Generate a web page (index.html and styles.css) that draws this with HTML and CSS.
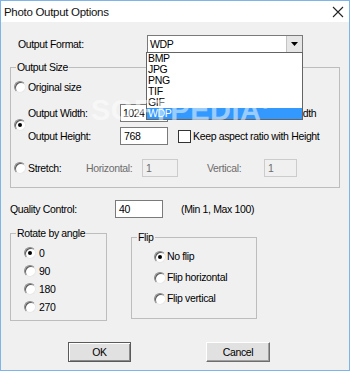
FILE: index.html
```html
<!DOCTYPE html>
<html>
<head>
<meta charset="utf-8">
<link rel="stylesheet" href="styles.css">
</head>
<body>
<div class="window">
  <div class="titlebar">
    <span class="title">Photo Output Options</span>
    <svg class="close" width="12" height="12" viewBox="0 0 12 12"><path d="M1 1 L11 11 M11 1 L1 11" stroke="#222" stroke-width="1.1" fill="none"/></svg>
  </div>
  <div class="body">
    <div class="format-row">
      <span class="lbl indent">Output Format:</span>
      <div class="combo">
        <span class="combo-val">WDP</span>
        <span class="combo-btn"><svg width="7" height="4" viewBox="0 0 7 4"><path d="M0 0 H7 L3.5 4 Z" fill="#000"/></svg></span>
        <ul class="list">
          <li>BMP</li><li>JPG</li><li>PNG</li><li>TIF</li><li>GIF</li><li class="sel">WDP</li>
        </ul>
      </div>
    </div>

    <div class="group size-box">
      <span class="legend">Output Size</span>
      <div class="opt-row">
        <span class="radio"></span><span class="lbl">Original size</span>
      </div>
      <div class="dim-group">
        <span class="radio checked"></span>
        <div class="dim-grid">
          <span class="lbl">Output Width:</span>
          <span class="edit tight">1024</span>
          <span class="check"></span>
          <span class="lbl">Keep aspect ratio with Width</span>
          <span class="lbl">Output Height:</span>
          <span class="edit">768</span>
          <span class="check"></span>
          <span class="lbl">Keep aspect ratio with Height</span>
        </div>
      </div>
      <div class="stretch-row">
        <span class="radio"></span>
        <span class="lbl">Stretch:</span>
        <span class="lbl dis">Horizontal:</span>
        <span class="edit disabled">1</span>
        <span></span>
        <span class="lbl dis">Vertical:</span>
        <span class="edit disabled">1</span>
      </div>
    </div>

    <div class="quality-row">
      <span class="lbl">Quality Control:</span>
      <span class="edit">40</span>
      <span class="lbl">(Min 1, Max 100)</span>
    </div>

    <div class="groups">
      <div class="group rotate-box">
        <span class="legend">Rotate by angle</span>
        <div class="r-row"><span class="radio checked"></span><span class="lbl">0</span></div>
        <div class="r-row"><span class="radio"></span><span class="lbl">90</span></div>
        <div class="r-row"><span class="radio"></span><span class="lbl">180</span></div>
        <div class="r-row"><span class="radio"></span><span class="lbl">270</span></div>
      </div>
      <div class="group flip-box">
        <span class="legend">Flip</span>
        <div class="f-row"><span class="radio checked"></span><span class="lbl">No flip</span></div>
        <div class="f-row"><span class="radio"></span><span class="lbl">Flip horizontal</span></div>
        <div class="f-row"><span class="radio"></span><span class="lbl">Flip vertical</span></div>
      </div>
    </div>

    <div class="buttons">
      <span class="btn default">OK</span>
      <span class="btn">Cancel</span>
    </div>
  </div>
  <span class="watermark">SOFTPEDIA<sup>®</sup></span>
</div>
</body>
</html>
```

FILE: styles.css
```css
* { box-sizing: border-box; }
html, body { margin: 0; padding: 0; }
body {
  width: 350px;
  height: 371px;
  font-family: "Liberation Sans", Arial, sans-serif;
  font-size: 10.5px;
  letter-spacing: -0.35px;
  color: #000;
  overflow: hidden;
}
.window {
  position: relative;
  width: 350px;
  height: 371px;
  border: 1px solid #7fb4e8;
  background: #f0f0f0;
  display: flex;
  flex-direction: column;
}
.titlebar {
  height: 21px;
  flex: none;
  background: #fff;
  display: flex;
  align-items: center;
  justify-content: space-between;
  padding: 0 5px 0 3px;
}
.title {
  font-family: "Liberation Sans", Arial, sans-serif;
  font-size: 11.5px;
  letter-spacing: -0.3px;
  color: #111;
}
.close { display: block; }
.body {
  padding: 13px 9px 0 9px;
}
.lbl { white-space: nowrap; line-height: 13px; }
.indent { padding-left: 8px; }
.dis { color: #6d6d6d; }

.format-row {
  display: grid;
  grid-template-columns: 137px 156px;
  align-items: center;
  height: 18px;
}
.combo {
  position: relative;
  height: 18px;
  border: 1px solid #7a7a7a;
  background: #fff;
  display: flex;
  align-items: center;
  justify-content: space-between;
  padding-left: 2px;
}
.combo-btn {
  width: 16px;
  height: 16px;
  background: #e6e6e6;
  border-left: 1px solid #c4c4c4;
  display: flex;
  align-items: center;
  justify-content: center;
}
.combo-btn svg { display: block; }
.list {
  position: absolute;
  left: -2px;
  top: 16px;
  width: 157px;
  margin: 0;
  padding: 0;
  list-style: none;
  background: #fff;
  border: 1px solid #646464;
  z-index: 2;
}
.list li {
  height: 11px;
  line-height: 11px;
  padding-left: 1px;
}
.list li.sel { background: #3399ff; color: #fff; }

.group {
  position: relative;
  border: 1px solid #bdbdbd;
}
.legend {
  position: absolute;
  top: -7px;
  left: 5px;
  padding: 0 1px;
  background: #f0f0f0;
  line-height: 13px;
  white-space: nowrap;
}
.radio {
  position: relative;
  display: inline-block;
  flex: none;
  width: 12px;
  height: 12px;
  border-radius: 50%;
  background: #fff;
  border: 1px solid;
  border-color: #8a8a8a #e8e8e8 #e8e8e8 #8a8a8a;
  box-shadow: inset 1px 1px 0 #5a5a5a;
}
.radio.checked::after {
  content: "";
  position: absolute;
  left: 3px;
  top: 3px;
  width: 4px;
  height: 4px;
  border-radius: 50%;
  background: #000;
}
.check {
  width: 13px;
  height: 13px;
  border: 1px solid #333;
  background: #fff;
}
.edit {
  height: 18px;
  border: 1px solid #7a7a7a;
  background: #fff;
  padding-left: 3px;
  line-height: 16px;
  white-space: nowrap;
}
.edit.tight { padding-left: 2px; letter-spacing: -0.5px; }
.edit.disabled {
  background: #f0f0f0;
  border-color: #cccccc;
  color: #6d6d6d;
}

.size-box {
  margin-top: 14px;
  height: 121px;
  padding: 12px 0 0 3px;
}
.opt-row {
  display: flex;
  align-items: center;
  gap: 2px;
  height: 14px;
}
.dim-group {
  margin-top: 10px;
  display: flex;
  align-items: center;
  gap: 2px;
}
.dim-grid {
  display: grid;
  grid-template-columns: 92px 48px 13px auto;
  grid-auto-rows: 18px;
  row-gap: 5px;
  column-gap: 0;
  align-items: center;
}
.dim-grid .check { margin-left: 10px; }
.dim-grid .check + .lbl { margin-left: 12px; }
.stretch-row {
  margin-top: 14px;
  display: grid;
  grid-template-columns: 14px 58px 56px 36px 29px 57px 33px;
  align-items: center;
  height: 18px;
}

.quality-row {
  margin-top: 12px;
  display: grid;
  grid-template-columns: 105px 48px auto;
  column-gap: 0;
  align-items: center;
  height: 18px;
}
.quality-row .edit + .lbl { padding-left: 18px; }

.groups {
  margin-top: 15px;
  display: flex;
  align-items: flex-start;
  gap: 24px;
}
.rotate-box {
  width: 97px;
  height: 88px;
  padding: 10px 0 0 13px;
}
.r-row {
  display: flex;
  align-items: center;
  gap: 3px;
  height: 18px;
}
.flip-box {
  margin-top: 4px;
  width: 126px;
  height: 82px;
  padding: 8px 0 0 22px;
}
.f-row {
  display: flex;
  align-items: center;
  gap: 1px;
  height: 21px;
}

.buttons {
  margin-top: 21px;
  padding-left: 58px;
  display: flex;
  gap: 75px;
}
.btn {
  width: 63px;
  height: 20px;
  display: flex;
  align-items: center;
  justify-content: center;
  background: #e1e1e1;
  border: 1px solid;
  border-color: #ffffff #6e6e6e #6e6e6e #ffffff;
  box-shadow: inset -1px -1px 0 #a0a0a0;
}
.btn + .btn { width: 64px; }
.btn.default {
  border-color: #5a5a5a;
  box-shadow: inset 1px 1px 0 #fff, inset -1px -1px 0 #8a8a8a;
}
.watermark {
  position: absolute;
  left: 90px;
  top: 93px;
  font-family: "Liberation Sans", Arial, sans-serif;
  font-weight: bold;
  font-size: 29px;
  letter-spacing: 0.5px;
  color: rgba(255, 255, 255, 0.5);
  z-index: 3;
  pointer-events: none;
}
.watermark sup { font-size: 10px; }
```
